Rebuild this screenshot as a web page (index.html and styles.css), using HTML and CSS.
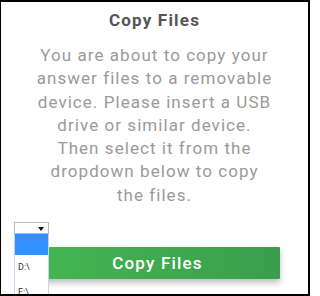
FILE: index.html
```html
<!DOCTYPE html>
<html>
<head>
<meta charset="utf-8">
<link rel="stylesheet" href="styles.css">
</head>
<body>
<div class="frame">
  <h1 class="title">Copy Files</h1>
  <p class="msg">You are about to copy your<br>answer files to a removable<br>device. Please insert a USB<br>drive or similar device.<br>Then select it from the<br>dropdown below to copy<br>the files.</p>
  <div class="actions">
    <div class="picker">
      <div class="select-box"><span class="arrow"></span></div>
      <ul class="options">
        <li class="opt selected"></li>
        <li class="opt">D:\</li>
        <li class="opt">E:\</li>
      </ul>
    </div>
    <button class="copy">Copy Files</button>
  </div>
</div>
</body>
</html>
```
FILE: styles.css
```css
html, body {
  margin: 0;
  padding: 0;
  background: #fff;
}
.frame {
  box-sizing: border-box;
  width: 310px;
  height: 296px;
  border-style: solid;
  border-color: #000;
  border-width: 2px 2px 2px 1px;
  overflow: hidden;
  font-family: Roboto, "Liberation Sans", sans-serif;
  display: flex;
  flex-direction: column;
}
.title {
  margin: 8px 0 0;
  text-align: center;
  font-size: 17px;
  font-weight: 700;
  letter-spacing: 1.2px;
  line-height: 20px;
  color: #555;
}
.msg {
  margin: 14px 0 0;
  padding: 0 20px;
  text-align: center;
  font-size: 17px;
  letter-spacing: 1.05px;
  line-height: 23.3px;
  color: #9a9a9a;
}
.actions {
  margin-top: 15px;
  padding-left: 13px;
  display: flex;
  flex-direction: column;
}
.picker {
  position: relative;
  width: 35px;
  height: 12px;
}
.select-box {
  box-sizing: border-box;
  width: 35px;
  height: 12px;
  border: 1px solid #b9b9b9;
  background: #fff;
  position: relative;
}
.arrow {
  position: absolute;
  right: 4px;
  top: 4px;
  border-left: 3px solid transparent;
  border-right: 3px solid transparent;
  border-top: 4px solid #111;
}
.options {
  position: absolute;
  z-index: 2;
  left: 0;
  top: 12px;
  width: 35px;
  box-sizing: border-box;
  margin: 0;
  padding: 0;
  list-style: none;
  background: #fff;
  border: 1px solid #c6d4ea;
  border-top: none;
}
.opt {
  height: 25px;
  padding-left: 3px;
  font-size: 9px;
  line-height: 25px;
  color: #333;
}
.opt.selected {
  height: 21px;
  background: #3390ff;
}
.copy {
  margin: 13px 0 0 21px;
  width: 245px;
  height: 32px;
  border: none;
  border-radius: 1px;
  background: linear-gradient(90deg, #44b653, #3a9e4c);
  color: #fff;
  font-family: Roboto, "Liberation Sans", sans-serif;
  font-size: 17px;
  font-weight: 500;
  letter-spacing: 1.2px;
  box-shadow: 0 4px 6px rgba(0,0,0,0.25);
  padding: 0;
}
```
